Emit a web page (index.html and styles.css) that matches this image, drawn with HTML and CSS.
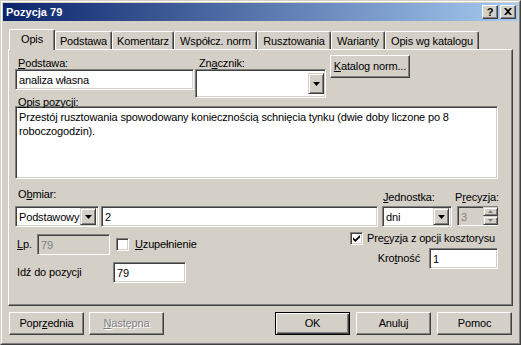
FILE: index.html
```html
<!DOCTYPE html>
<html lang="pl">
<head>
<meta charset="utf-8">
<title>Pozycja 79</title>
<link rel="stylesheet" href="styles.css">
</head>
<body>
<div class="window">
  <div class="frame">
    <div class="titlebar">
      <span class="title">Pozycja 79</span>
      <div class="caption-btns">
        <span class="cbtn help">?</span>
        <span class="cbtn close"><svg width="8" height="7" viewBox="0 0 8 7"><path d="M0 0h2l2 2 2-2h2L5 3.5 8 7H6L4 5 2 7H0l3-3.5z" fill="#000"/></svg></span>
      </div>
    </div>

    <div class="tabs">
      <div class="tab sel t-opis">Opis</div>
      <div class="tab t-podst">Podstawa</div>
      <div class="tab t-kom">Komentarz</div>
      <div class="tab t-wsp">Współcz. norm</div>
      <div class="tab t-rusz">Rusztowania</div>
      <div class="tab t-war">Warianty</div>
      <div class="tab t-kat">Opis wg katalogu</div>
    </div>

    <div class="panel">
      <div class="row1">
        <div class="col-podst">
          <div class="lbl"><u>P</u>odstawa:</div>
          <div class="field f-podst">analiza własna</div>
        </div>
        <div class="col-znacz">
          <div class="lbl lbl-znacz">Zn<u>a</u>cznik:</div>
          <div class="combo-tall"><span class="ddbtn"><svg width="7" height="4" viewBox="0 0 7 4"><path d="M0 0h7L3.5 4z" fill="#000"/></svg></span></div>
        </div>
        <div class="btn btn-katalog"><span><u>K</u>atalog norm...</span></div>
      </div>

      <div class="lbl lbl-opis"><u>O</u>pis pozycji:</div>
      <div class="field textarea">Przestój rusztowania spowodowany koniecznością schnięcia tynku (dwie doby liczone po 8 roboczogodzin).</div>

      <div class="row-labels">
        <div class="lbl lbl-obmiar">O<u>b</u>miar:</div>
        <div class="lbl lbl-jedn"><u>J</u>ednostka:</div>
        <div class="lbl lbl-prec">P<u>r</u>ecyzja:</div>
      </div>
      <div class="row-controls">
        <div class="field combo c-obmiar"><span class="ctext">Podstawowy</span><span class="ddbtn"><svg width="7" height="4" viewBox="0 0 7 4"><path d="M0 0h7L3.5 4z" fill="#000"/></svg></span></div>
        <div class="field f-ilosc">2</div>
        <div class="field combo c-jedn"><span class="ctext">dni</span><span class="ddbtn"><svg width="7" height="4" viewBox="0 0 7 4"><path d="M0 0h7L3.5 4z" fill="#000"/></svg></span></div>
        <div class="spinner">
          <div class="field disabled f-prec">3</div>
          <div class="updown">
            <span class="ud"><svg width="5" height="3" viewBox="0 0 5 3"><path d="M2.5 0L5 3H0z" fill="#808080"/></svg></span>
            <span class="ud"><svg width="5" height="3" viewBox="0 0 5 3"><path d="M0 0h5L2.5 3z" fill="#808080"/></svg></span>
          </div>
        </div>
      </div>

      <div class="lower">
        <div class="lower-left">
          <div class="row-lp">
            <span class="lbl-inline"><u>L</u>p.</span>
            <div class="field disabled f-lp">79</div>
            <span class="check"></span>
            <span class="check-text"><u>U</u>zupełnienie</span>
          </div>
          <div class="row-idz">
            <span class="lbl-inline lbl-idz">Idź do pozycji</span>
            <div class="field f-idz">79</div>
          </div>
        </div>
        <div class="lower-right">
          <div class="row-prec">
            <span class="check"><svg width="7" height="7" viewBox="0 0 7 7"><path d="M0 2.2l2.3 2.3L7 0v2.5L2.3 7 0 4.7z" fill="#000"/></svg></span>
            <span class="check-text">Pre<u>c</u>yzja z opcji kosztorysu</span>
          </div>
          <div class="row-krot">
            <span class="lbl-inline">Kro<u>t</u>ność</span>
            <div class="field f-krot">1</div>
          </div>
        </div>
      </div>
    </div>

    <div class="buttons">
      <div class="btn"><span>Popr<u>z</u>ednia</span></div>
      <div class="btn disabled-btn"><span><u>N</u>astępna</span></div>
      <div class="btn default push-right"><span>OK</span></div>
      <div class="btn"><span>Anuluj</span></div>
      <div class="btn"><span>Pomoc</span></div>
    </div>
  </div>
</div>
</body>
</html>
```

FILE: styles.css
```css
* { box-sizing: border-box; }

html, body {
  margin: 0;
  padding: 0;
  background: #d4d0c8;
}

body {
  width: 521px;
  height: 345px;
  overflow: hidden;
  font-family: "Liberation Sans", Arial, sans-serif;
  font-size: 11px;
  letter-spacing: -0.15px;
  color: #000;
}

u { text-decoration: underline; text-underline-offset: 1px; }

.window {
  width: 521px;
  height: 345px;
  border: 1px solid;
  border-color: #d4d0c8 #404040 #404040 #d4d0c8;
}

.frame {
  height: 100%;
  border: 1px solid;
  border-color: #fff #808080 #808080 #fff;
  padding: 1px;
}

/* title bar */
.titlebar {
  height: 18px;
  background: linear-gradient(to right, #0a246a, #a6caf0);
  display: flex;
  align-items: center;
  justify-content: space-between;
  padding: 0 2px 0 3px;
}

.title {
  color: #fff;
  font-weight: bold;
  font-size: 11px;
  line-height: 13px;
  letter-spacing: 0;
}

.caption-btns {
  display: flex;
  gap: 2px;
}

.cbtn {
  width: 16px;
  height: 14px;
  background: #d4d0c8;
  border: 1px solid;
  border-color: #fff #404040 #404040 #fff;
  box-shadow: inset -1px -1px #808080;
  display: flex;
  align-items: center;
  justify-content: center;
}

.help {
  font-weight: bold;
  font-size: 11px;
  line-height: 12px;
  padding-bottom: 1px;
}

.close svg { display: block; margin-top: -1px; }

/* tabs */
.tabs {
  margin: 8px 0 0 6px;
  height: 20px;
  display: flex;
  align-items: flex-end;
}

.tab {
  height: 18px;
  border-top: 1px solid #fff;
  border-left: 1px solid #fff;
  border-right: 1px solid #404040;
  box-shadow: inset -1px 0 #808080;
  border-radius: 2px 2px 0 0;
  text-align: center;
  line-height: 12px;
  padding-top: 3px;
  white-space: nowrap;
}

.tab.sel {
  position: relative;
  height: 21px;
  margin-bottom: -1px;
  background: #d4d0c8;
  padding-top: 3px;
  z-index: 1;
}

.t-opis { width: 46px; }
.t-podst { width: 57px; }
.t-kom { width: 62px; }
.t-wsp { width: 83px; }
.t-rusz { width: 74px; }
.t-war { width: 54px; }
.t-kat { width: 94px; }

/* panel */
.panel {
  margin-left: 5px;
  width: 505px;
  height: 257px;
  border-top: 1px solid #fff;
  border-left: 1px solid #fff;
  border-right: 1px solid #404040;
  border-bottom: 1px solid #404040;
  box-shadow: inset -1px -1px #808080;
  padding: 5px 0 0 6px;
}

.lbl {
  line-height: 12px;
  padding-left: 3px;
  white-space: nowrap;
}

.row1 {
  display: flex;
  align-items: flex-start;
  height: 42px;
}

.col-podst {
  width: 179px;
  margin-top: 2px;
}

.col-znacz {
  width: 131px;
  margin-top: 2px;
  margin-left: 1px;
}

.lbl-znacz { padding-left: 4px; }

.field {
  height: 21px;
  background: #fff;
  border: 1px solid;
  border-color: #808080 #fff #fff #808080;
  box-shadow: inset 1px 1px #404040, inset -1px -1px #d4d0c8;
  padding: 1px 2px 0 3px;
  line-height: 18px;
  white-space: nowrap;
  overflow: hidden;
}

.field.disabled {
  background: #d4d0c8;
  color: #808080;
}

.combo-tall {
  height: 29px;
  background: #fff;
  border: 1px solid;
  border-color: #808080 #fff #fff #808080;
  box-shadow: inset 1px 1px #404040, inset -1px -1px #d4d0c8;
  display: flex;
  align-items: center;
  justify-content: flex-end;
  padding-right: 1px;
}

.combo-tall .ddbtn { height: 21px; }

.ddbtn {
  width: 16px;
  height: 17px;
  flex: none;
  background: #d4d0c8;
  border: 1px solid;
  border-color: #d4d0c8 #404040 #404040 #d4d0c8;
  box-shadow: inset 1px 1px #fff, inset -1px -1px #808080;
  display: flex;
  align-items: center;
  justify-content: center;
}

.ddbtn svg { display: block; }

.btn {
  width: 75px;
  height: 23px;
  background: #d4d0c8;
  border: 1px solid;
  border-color: #fff #404040 #404040 #fff;
  box-shadow: inset -1px -1px #808080;
  display: flex;
  align-items: center;
  justify-content: center;
  white-space: nowrap;
  line-height: 13px;
}

.btn-katalog {
  width: 80px;
  margin-left: 4px;
}

.lbl-opis {
  margin-top: -1px;
  margin-bottom: -2px;
}

.textarea {
  width: 483px;
  height: 73px;
  white-space: normal;
  line-height: 14px;
  padding: 3px 4px 0 3px;
}

.row-labels {
  display: flex;
  margin-top: 9px;
  height: 18px;
}

.lbl-obmiar { width: 367px; }
.lbl-jedn { width: 73px; padding: 3px 0 0 1px; }
.lbl-prec { padding: 3px 0 0 0; }

.row-controls {
  display: flex;
  height: 21px;
}

.combo {
  display: flex;
  align-items: center;
  padding: 2px 2px 2px 3px;
}

.ctext { flex: 1; overflow: hidden; line-height: 17px; padding-top: 1px; }

.c-obmiar { width: 84px; }
.f-ilosc { width: 277px; margin-left: 2px; }
.c-jedn { width: 70px; margin-left: 4px; }

.spinner {
  display: flex;
  margin-left: 5px;
  width: 41px;
  height: 20px;
}

.f-prec {
  width: 26px;
  height: 20px;
  border-right: none;
  box-shadow: inset 1px 1px #404040;
}

.updown {
  width: 15px;
  display: flex;
  flex-direction: column;
  border-top: 1px solid #808080;
  border-bottom: 1px solid #fff;
}

.ud {
  flex: 1;
  background: #d4d0c8;
  border: 1px solid;
  border-color: #d4d0c8 #404040 #404040 #d4d0c8;
  box-shadow: inset 1px 1px #fff, inset -1px -1px #808080;
  display: flex;
  align-items: center;
  justify-content: center;
}

.ud svg { display: block; }

/* lower section */
.lower {
  display: flex;
  justify-content: space-between;
  width: 483px;
}

.lower-left {
  padding-top: 7px;
}

.row-lp, .row-idz, .row-prec, .row-krot {
  display: flex;
  align-items: center;
}

.lbl-inline {
  line-height: 13px;
  padding-left: 2px;
  white-space: nowrap;
}

.f-lp { width: 73px; margin-left: 2px; }

.row-lp .lbl-inline { width: 20px; }

.check {
  width: 13px;
  height: 13px;
  flex: none;
  background: #fff;
  border: 1px solid;
  border-color: #808080 #fff #fff #808080;
  box-shadow: inset 1px 1px #404040, inset -1px -1px #d4d0c8;
  display: flex;
  align-items: center;
  justify-content: center;
}

.check svg { display: block; }

.row-lp .check { margin-left: 6px; }

.check-text {
  margin-left: 6px;
  line-height: 13px;
  white-space: nowrap;
}

.row-idz { margin-top: 7px; }
.lbl-idz { width: 98px; }
.f-idz { width: 73px; }

.lower-right {
  padding-top: 5px;
  display: flex;
  flex-direction: column;
  align-items: flex-end;
}

.row-prec { width: 148px; }
.row-prec .check-text { margin-left: 4px; }

.row-krot { margin-top: 3px; }
.row-krot .lbl-inline { margin-right: 9px; }
.f-krot { width: 69px; }

/* bottom buttons */
.buttons {
  display: flex;
  margin-top: 6px;
  padding: 0 6px;
  gap: 6px;
}

.buttons .btn:nth-child(2) { margin-left: -1px; }

.push-right { margin-left: auto; }

.btn.default {
  border-color: #000;
  box-shadow: inset 1px 1px #fff, inset -1px -1px #404040, inset -2px -2px #808080;
}

.disabled-btn {
  color: #808080;
  text-shadow: 1px 1px #fff;
}
```
